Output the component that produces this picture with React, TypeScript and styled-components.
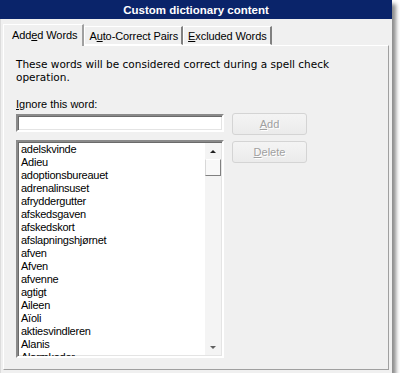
import React from 'react';
import styled, { createGlobalStyle } from 'styled-components';

const GlobalStyle = createGlobalStyle`
  html, body {
    margin: 0;
    padding: 0;
    background: #ffffff;
  }
  body {
    font-family: "Liberation Sans", Arial, sans-serif;
    font-size: 11px;
    color: #000;
  }
`;

const words = [
  'adelskvinde',
  'Adieu',
  'adoptionsbureauet',
  'adrenalinsuset',
  'afryddergutter',
  'afskedsgaven',
  'afskedskort',
  'afslapningshjørnet',
  'afven',
  'Afven',
  'afvenne',
  'agtigt',
  'Aileen',
  'Aïoli',
  'aktiesvindleren',
  'Alanis',
  'Alarmkoder',
];

const App = () => {
  return (
    <>
      <GlobalStyle />
      <Window>
        <TitleBar>Custom dictionary content</TitleBar>
        <Body>
          <TabRow>
            <Tab $active>
              Add<u>e</u>d Words
            </Tab>
            <Tab>
              A<u>u</u>to-Correct Pairs
            </Tab>
            <Tab>
              <u>E</u>xcluded Words
            </Tab>
          </TabRow>
          <Panel>
            <Intro>These words will be considered correct during a spell check operation.</Intro>
            <Label>
              <u>I</u>gnore this word:
            </Label>
            <EditGrid>
              <LeftColumn>
                <WordInput type="text" />
                <ListBox>
                  <Items>
                    {words.map((w, i) => (
                      <Item key={i}>{w}</Item>
                    ))}
                  </Items>
                  <ScrollBar>
                    <ArrowButton>
                      <ArrowUp />
                    </ArrowButton>
                    <Thumb />
                    <Track />
                    <ArrowButton>
                      <ArrowDown />
                    </ArrowButton>
                  </ScrollBar>
                </ListBox>
              </LeftColumn>
              <ButtonColumn>
                <Button disabled>
                  <u>A</u>dd
                </Button>
                <Button disabled>
                  <u>D</u>elete
                </Button>
              </ButtonColumn>
            </EditGrid>
          </Panel>
        </Body>
      </Window>
    </>
  );
};

const Window = styled.div`
  width: 392px;
  height: 373px;
  background: #f0f0f0;
  box-shadow: 4px 4px 4px rgba(0, 0, 0, 0.45);
  display: flex;
  flex-direction: column;
`;

const TitleBar = styled.div`
  height: 24px;
  background: #0a246a;
  color: #fff;
  font-weight: bold;
  font-size: 11.5px;
  display: flex;
  align-items: center;
  justify-content: center;
`;

const Body = styled.div`
  flex: 1;
  display: flex;
  flex-direction: column;
  padding: 5px 3px 3px 2px;
  border-left: 1px solid #dcdcdc;
`;

const TabRow = styled.div`
  display: flex;
  align-items: flex-end;
  position: relative;
  z-index: 1;
  margin-bottom: -1px;
`;

const Tab = styled.div<{ $active?: boolean }>`
  height: ${(p) => (p.$active ? '22px' : '19px')};
  padding: ${(p) => (p.$active ? '0 5px 2px 8px' : '0 3px 0 4px')};
  background: #f0f0f0;
  display: flex;
  align-items: center;
  border-top: 1px solid #fff;
  border-left: 1px solid #fff;
  border-right: 2px solid ${(p) => (p.$active ? '#a0a0a0' : '#808080')};
  border-bottom: ${(p) => (p.$active ? 'none' : '1px solid #fff')};
  box-sizing: border-box;
  margin-bottom: ${(p) => (p.$active ? '0' : '1px')};
  white-space: nowrap;
  letter-spacing: -0.1px;
`;

const Panel = styled.div`
  flex: 1;
  border: 1px solid;
  border-color: #fff #a0a0a0 #a0a0a0 #fff;
  padding: 12px 12px 11px;
  display: flex;
  flex-direction: column;
`;

const Intro = styled.div`
  font-family: "DejaVu Sans", Verdana, sans-serif;
  font-size: 10.5px;
  line-height: 13px;
  max-width: 352px;
  margin-bottom: 15px;
`;

const Label = styled.div`
  line-height: 13px;
  margin-bottom: 3px;
  margin-top: -1px;
`;

const EditGrid = styled.div`
  display: grid;
  grid-template-columns: 208px 75px;
  column-gap: 8px;
  margin-top: -1px;
`;

const LeftColumn = styled.div`
  display: flex;
  flex-direction: column;
  gap: 8px;
  padding-top: 1px;
`;

const sunken = `
  border: 2px solid;
  border-color: #8a8a8a #ffffff #ffffff #8a8a8a;
  box-shadow: inset 1px 1px 0 #6a6a6a, inset -1px -1px 0 #e4e4e4;
  box-sizing: border-box;
  background: #fff;
`;

const WordInput = styled.input`
  ${sunken}
  width: 208px;
  height: 18px;
  margin: 0;
  padding: 0 3px;
  font: inherit;
  outline: none;
`;

const ListBox = styled.div`
  ${sunken}
  width: 208px;
  height: 218px;
  display: flex;
  overflow: hidden;
`;

const Items = styled.div`
  flex: 1;
  padding: 1px 0 0 3px;
  overflow: hidden;
`;

const Item = styled.div`
  line-height: 13px;
  white-space: nowrap;
  letter-spacing: -0.25px;
`;

const ScrollBar = styled.div`
  width: 16px;
  margin: 1px 1px 1px 0;
  background: #f4f4f4;
  display: flex;
  flex-direction: column;
`;

const ArrowButton = styled.div`
  height: 16px;
  display: flex;
  align-items: center;
  justify-content: center;
`;

const ArrowUp = styled.div`
  width: 0;
  height: 0;
  border-left: 3px solid transparent;
  border-right: 3px solid transparent;
  border-bottom: 3px solid #202020;
`;

const ArrowDown = styled.div`
  width: 0;
  height: 0;
  border-left: 3px solid transparent;
  border-right: 3px solid transparent;
  border-top: 3px solid #606060;
`;

const Thumb = styled.div`
  height: 17px;
  background: #f8f8f8;
  border: 1px solid;
  border-color: #ffffff #808080 #808080 #d8d8d8;
  box-sizing: border-box;
`;

const Track = styled.div`
  flex: 1;
`;

const ButtonColumn = styled.div`
  display: flex;
  flex-direction: column;
  gap: 6px;
`;

const Button = styled.button`
  width: 75px;
  height: 22px;
  margin: 0;
  padding: 0;
  border: 1px solid #d4d4d4;
  border-radius: 3px;
  background: linear-gradient(#f4f4f4, #ebebeb);
  color: #a0a0a0;
  font: inherit;
  font-size: 11px;
  text-shadow: 1px 1px 0 #ffffff;
`;

export default App;
